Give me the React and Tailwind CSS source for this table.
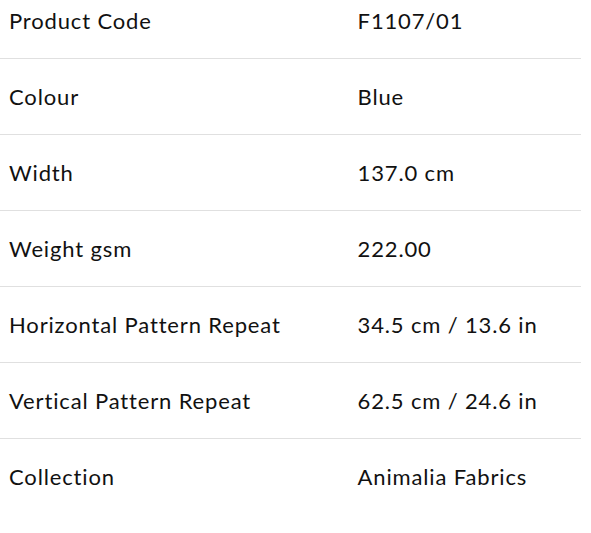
import React from 'react';

const specs = [
  ['Product Code', 'F1107/01'],
  ['Colour', 'Blue'],
  ['Width', '137.0 cm'],
  ['Weight gsm', '222.00'],
  ['Horizontal Pattern Repeat', '34.5 cm / 13.6 in'],
  ['Vertical Pattern Repeat', '62.5 cm / 24.6 in'],
  ['Collection', 'Animalia Fabrics'],
];

export default function App() {
  return (
    <div className="w-[591px] h-[533px] bg-white font-['Lato',sans-serif] text-[22px] leading-[24px] tracking-[0.85px] text-[#111]">
      <div className="w-[581px]">
        {specs.map(([label, value], idx) => (
          <div
            key={label}
            className={`flex ${idx === 0 ? 'pt-[9px] pb-[25px]' : 'pt-[26px] pb-[25px]'} ${idx < specs.length - 1 ? 'border-b border-[#e0e0e0]' : ''}`}
          >
            <div className="w-[60%] pl-[9px]">{label}</div>
            <div className="flex-1 pl-[9px]">{value}</div>
          </div>
        ))}
      </div>
    </div>
  );
}
